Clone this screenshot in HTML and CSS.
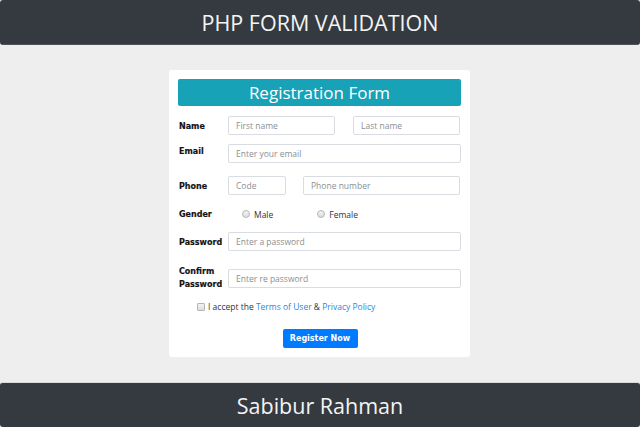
FILE: index.html
```html
<!DOCTYPE html>
<html lang="en">
<head>
<meta charset="utf-8">
<title>PHP Form Validation</title>
<link rel="stylesheet" href="styles.css">
</head>
<body>
<div class="page">
  <header class="bar bar-top">PHP FORM VALIDATION</header>
  <main class="main">
    <form class="card">
      <h1 class="card-title">Registration Form</h1>

      <div class="row row-name">
        <label class="lbl">Name</label>
        <div class="pair pair-name">
          <input class="inp" type="text" placeholder="First name">
          <input class="inp" type="text" placeholder="Last name">
        </div>
      </div>

      <div class="row row-email">
        <label class="lbl lbl-top">Email</label>
        <input class="inp" type="email" placeholder="Enter your email">
      </div>

      <div class="row row-phone">
        <label class="lbl">Phone</label>
        <div class="pair pair-phone">
          <input class="inp" type="text" placeholder="Code">
          <input class="inp" type="text" placeholder="Phone number">
        </div>
      </div>

      <div class="row row-gender">
        <label class="lbl">Gender</label>
        <div class="radios">
          <label class="radio"><span class="dot"></span>Male</label>
          <label class="radio radio-f"><span class="dot"></span>Female</label>
        </div>
      </div>

      <div class="row row-pass">
        <label class="lbl">Password</label>
        <input class="inp" type="password" placeholder="Enter a password">
      </div>

      <div class="row row-confirm">
        <label class="lbl lbl-two">Confirm<br>Password</label>
        <input class="inp" type="password" placeholder="Enter re password">
      </div>

      <div class="terms">
        <span class="box"></span>
        <span>I accept the <a href="#">Terms of User</a> &amp; <a href="#">Privacy Policy</a></span>
      </div>

      <div class="actions">
        <button class="btn" type="button">Register Now</button>
      </div>
    </form>
  </main>
  <footer class="bar bar-bottom">Sabibur Rahman</footer>
</div>
</body>
</html>
```

FILE: styles.css
```css
* { box-sizing: border-box; }
html, body { margin: 0; padding: 0; }
body {
  background: #eeeeee;
  font-family: "Open Sans", "Liberation Sans", sans-serif;
  color: #333;
}
.page {
  height: 427px;
  display: flex;
  flex-direction: column;
}
.bar {
  height: 45px;
  background: #343a40;
  color: #f4f4f4;
  display: flex;
  align-items: center;
  justify-content: center;
  font-size: 21.5px;
  border-radius: 3px;
  flex: 0 0 auto;
}
.bar-top { border-bottom: 1px solid #4d5358; }
.bar-bottom { border-top: 1px solid #d6d8da; }
.main {
  flex: 1;
  display: flex;
  align-items: center;
  justify-content: center;
  padding-right: 1px;
}
.card {
  width: 301px;
  height: 287px;
  background: #fff;
  border-radius: 3px;
  padding: 9px;
  display: flex;
  flex-direction: column;
}
.card-title {
  margin: 0;
  height: 27px;
  background: #17a2b8;
  color: #fff;
  border-radius: 2px;
  font-weight: 400;
  font-size: 17px;
  line-height: 27px;
  text-align: center;
}
.row {
  display: grid;
  grid-template-columns: 49px 1fr;
  align-items: center;
  padding-left: 1px;
}
.row-name { margin-top: 10px; }
.row-email { margin-top: 9px; }
.row-phone { margin-top: 13px; }
.row-gender { margin-top: 10px; height: 18px; }
.row-pass { margin-top: 9px; }
.row-confirm { margin-top: 14.5px; }
.lbl {
  font-family: "DejaVu Sans", sans-serif;
  font-weight: 700;
  font-size: 8px;
  color: #111;
  -webkit-text-stroke: 0.15px #111;
  padding-top: 1px;
}
.lbl-top { align-self: start; padding-top: 3px; }
.lbl-two { line-height: 13px; margin-top: -2px; }
.inp {
  height: 19px;
  width: 100%;
  border: 1px solid #d9dde1;
  border-radius: 2px;
  padding: 0 7px;
  font-family: "Open Sans", sans-serif;
  font-size: 8.5px;
  color: #555;
  background: #fff;
  outline: none;
}
.inp::placeholder { color: #8a8f94; }
.pair { display: grid; }
.pair-name { grid-template-columns: 107px 107px; column-gap: 18px; }
.pair-phone { grid-template-columns: 58px 157px; column-gap: 17px; }
.radios {
  display: flex;
  align-items: center;
  padding-left: 14px;
  font-size: 8.5px;
  color: #333;
}
.radio { display: flex; align-items: center; }
.radio-f { margin-left: 44px; }
.dot {
  width: 8px;
  height: 8px;
  border-radius: 50%;
  border: 1px solid #b5b5b5;
  background: linear-gradient(#f4f4f4, #dcdcdc);
  margin-right: 4px;
  margin-top: -1px;
}
.terms {
  margin-top: 10px;
  padding-left: 19px;
  display: flex;
  align-items: center;
  line-height: 12px;
  font-size: 8.5px;
  color: #333;
}
.box {
  width: 8px;
  height: 8px;
  border: 1px solid #b5b5b5;
  border-radius: 1px;
  background: linear-gradient(#f4f4f4, #dcdcdc);
  margin-right: 3px;
}
.terms a { color: #2b86e0; text-decoration: none; }
.actions {
  margin-top: auto;
  display: flex;
  justify-content: center;
}
.btn {
  width: 75px;
  height: 19px;
  background: #007bff;
  color: #fff;
  border: none;
  border-radius: 2px;
  font-family: "DejaVu Sans", sans-serif;
  font-weight: 700;
  font-size: 8px;
  padding: 0;
  margin-left: 1px;
}
```
